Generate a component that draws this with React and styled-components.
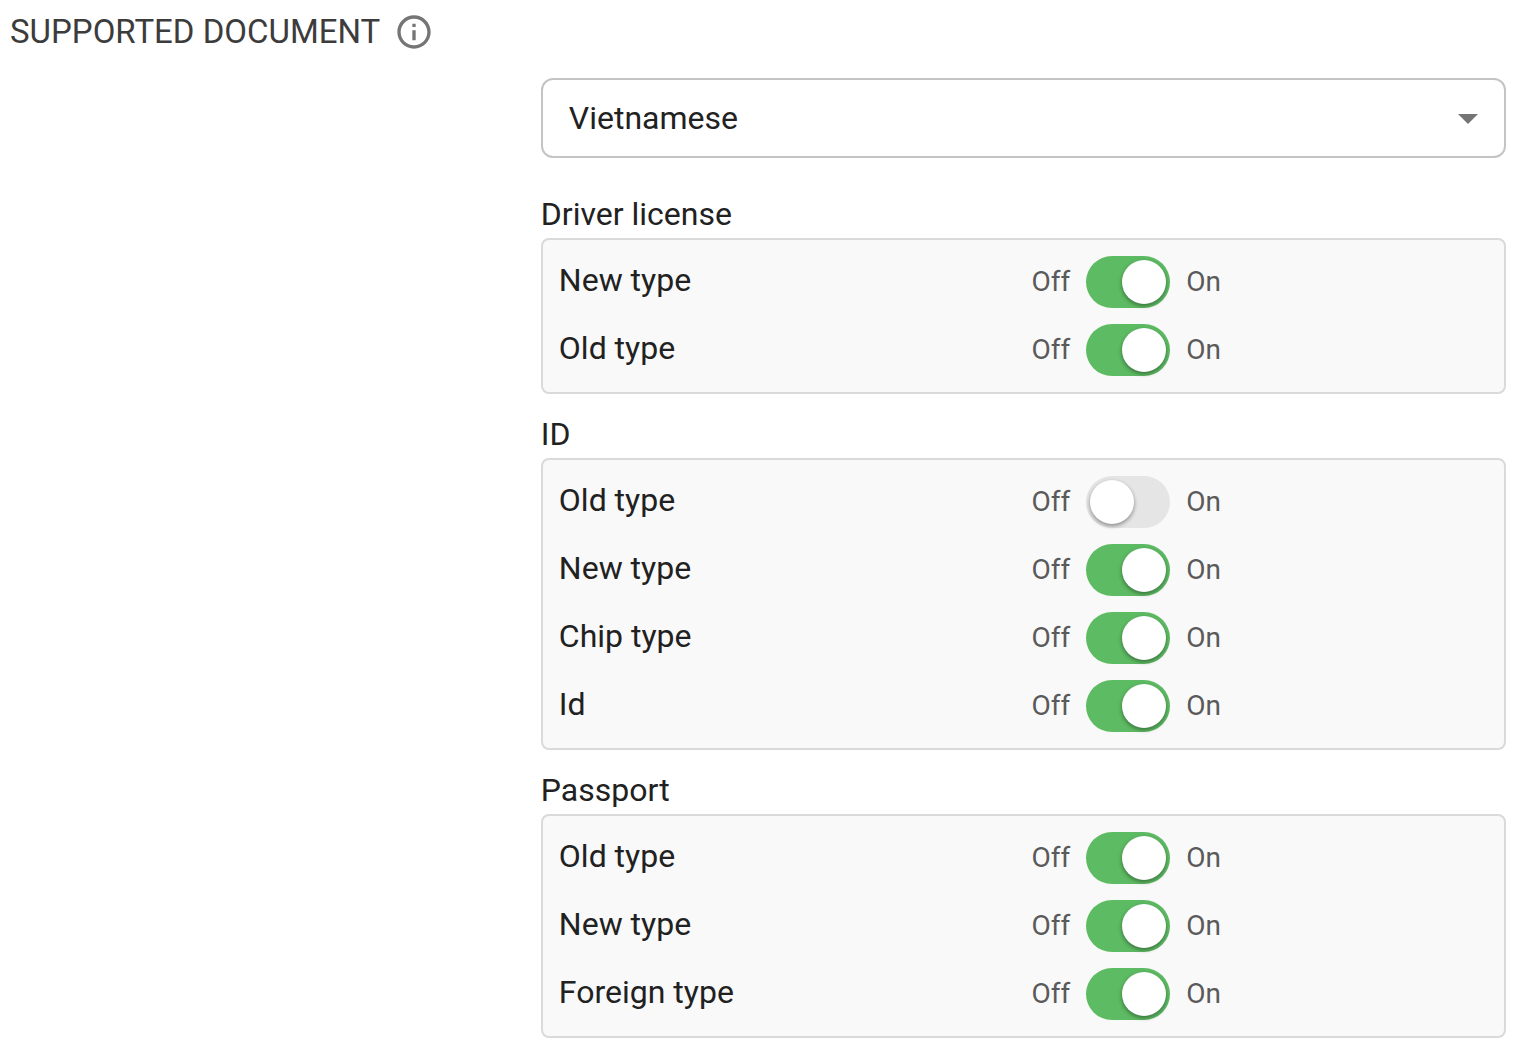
import { useState } from "react";
import styled, { createGlobalStyle } from "styled-components";

const GlobalStyle = createGlobalStyle`
  * {
    box-sizing: border-box;
  }
  body {
    margin: 0;
    background-color: #ffffff;
    color: #212121;
    font-family: Roboto, "Liberation Sans", sans-serif;
    font-size: 32px;
  }
`;

const MainContainer = styled.main`
  padding: 8px 24px 22px 10px;
`;

const TitleRow = styled.header`
  display: flex;
  align-items: center;
  gap: 14px;
  height: 48px;
`;

const Title = styled.h1`
  margin: 0;
  color: #3c3c3c;
  font-size: 33px;
  font-weight: 400;
  line-height: 48px;
  text-transform: uppercase;
`;

const InfoButton = styled.button`
  display: flex;
  padding: 0;
  border: none;
  background: none;
  color: #757575;
  cursor: pointer;
`;

const SettingArea = styled.div`
  display: grid;
  grid-template-columns: 11fr 20fr;
  margin-top: 22px;
`;

const SettingContent = styled.div`
  grid-column: 2;
  display: flex;
  flex-direction: column;
  gap: 16px;
`;

const SelectBox = styled.div`
  position: relative;
  margin-bottom: 16px;
  svg {
    position: absolute;
    top: 16px;
    right: 14px;
    color: #757575;
    pointer-events: none;
  }
`;

const CountrySelect = styled.select`
  appearance: none;
  display: block;
  width: 100%;
  height: 80px;
  padding: 0 64px 0 26px;
  border: 2px solid #c4c4c4;
  border-radius: 12px;
  background-color: #ffffff;
  color: #212121;
  font-family: inherit;
  font-size: 32px;
`;

const GroupTitle = styled.h2`
  margin: 0;
  font-size: 32px;
  font-weight: 400;
  line-height: 48px;
`;

const GroupBox = styled.div`
  padding: 8px 16px;
  border: 2px solid #dadada;
  border-radius: 8px;
  background-color: #f9f9f9;
`;

const TypeRow = styled.div`
  display: grid;
  grid-template-columns: 1fr 1fr;
  height: 68px;
`;

const TypeLabel = styled.label`
  line-height: 64px;
`;

const SwitchArea = styled.div`
  display: flex;
  align-items: center;
  gap: 16px;
  padding-left: 8px;
`;

const SwitchText = styled.span`
  padding-bottom: 2px;
  color: #5a5a5a;
  font-size: 28px;
`;

const Switch = styled.input`
  appearance: none;
  width: 84px;
  height: 52px;
  margin: 0;
  padding: 4px;
  border-radius: 26px;
  background-color: #e5e5e5;
  cursor: pointer;
  &::before {
    content: "";
    display: block;
    width: 44px;
    height: 44px;
    border-radius: 50%;
    background-color: #ffffff;
    box-shadow: 0 2px 4px rgba(0, 0, 0, 0.4);
  }
  &:checked {
    background-color: #5dbb63;
  }
  &:checked::before {
    margin-left: auto;
  }
`;

const documentGroups = [
  {
    name: "Driver license",
    types: [
      { label: "New type", on: true },
      { label: "Old type", on: true },
    ],
  },
  {
    name: "ID",
    types: [
      { label: "Old type", on: false },
      { label: "New type", on: true },
      { label: "Chip type", on: true },
      { label: "Id", on: true },
    ],
  },
  {
    name: "Passport",
    types: [
      { label: "Old type", on: true },
      { label: "New type", on: true },
      { label: "Foreign type", on: true },
    ],
  },
];

function TypeSwitch({ id, label, on }) {
  const [checked, setChecked] = useState(on);
  return (
    <TypeRow>
      <TypeLabel htmlFor={id}>{label}</TypeLabel>
      <SwitchArea>
        <SwitchText>Off</SwitchText>
        <Switch
          id={id}
          type="checkbox"
          role="switch"
          checked={checked}
          onChange={(e) => setChecked(e.target.checked)}
        />
        <SwitchText>On</SwitchText>
      </SwitchArea>
    </TypeRow>
  );
}

function App() {
  return (
    <MainContainer>
      <GlobalStyle />
      <TitleRow>
        <Title>Supported document</Title>
        <InfoButton type="button" aria-label="Info">
          <svg width="40" height="40" viewBox="0 0 24 24" fill="currentColor">
            <path d="M11 7h2v2h-2zm0 4h2v6h-2zm1-9C6.48 2 2 6.48 2 12s4.48 10 10 10 10-4.48 10-10S17.52 2 12 2zm0 18c-4.41 0-8-3.59-8-8s3.59-8 8-8 8 3.59 8 8-3.59 8-8 8z" />
          </svg>
        </InfoButton>
      </TitleRow>
      <SettingArea>
        <SettingContent>
          <SelectBox>
            <CountrySelect aria-label="Country" defaultValue="vn">
              <option value="vn">Vietnamese</option>
            </CountrySelect>
            <svg width="48" height="48" viewBox="0 0 24 24" fill="currentColor">
              <path d="M7 10l5 5 5-5z" />
            </svg>
          </SelectBox>
          {documentGroups.map((group) => (
            <section key={group.name}>
              <GroupTitle>{group.name}</GroupTitle>
              <GroupBox>
                {group.types.map((type) => (
                  <TypeSwitch
                    key={type.label}
                    id={`${group.name}-${type.label}`.replaceAll(" ", "-")}
                    label={type.label}
                    on={type.on}
                  />
                ))}
              </GroupBox>
            </section>
          ))}
        </SettingContent>
      </SettingArea>
    </MainContainer>
  );
}

export default App;
